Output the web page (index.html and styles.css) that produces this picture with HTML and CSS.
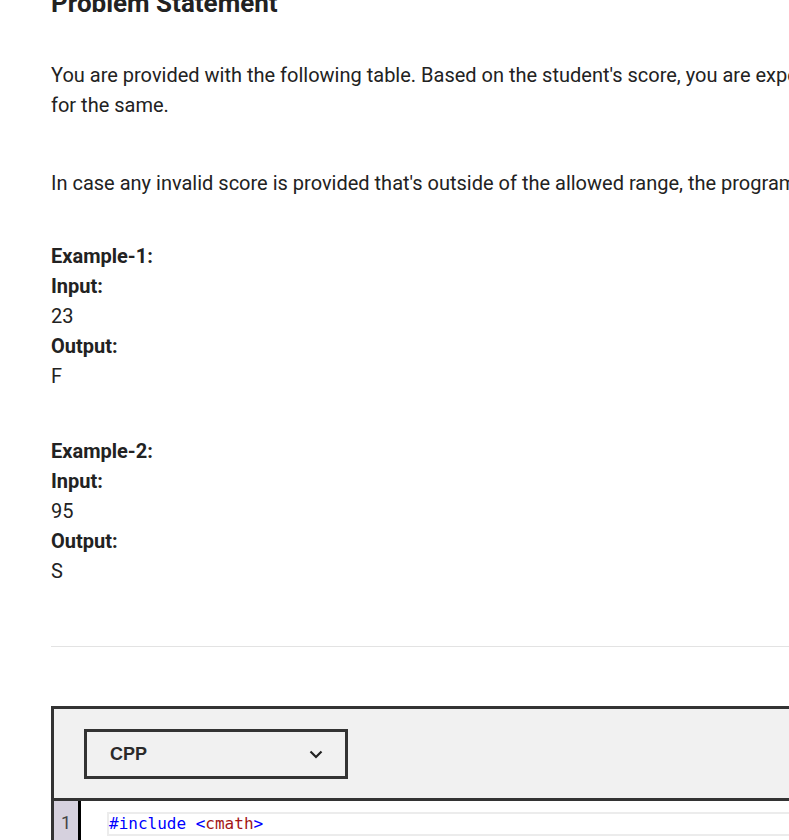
FILE: index.html
```html
<!DOCTYPE html>
<html lang="en">
<head>
<meta charset="utf-8">
<title>Problem Statement</title>
<link rel="stylesheet" href="styles.css">
</head>
<body>
<main class="page">
  <h2 class="title">Problem Statement</h2>
  <p class="para">You are provided with the following table. Based on the student's score, you are expected to print the corresponding grade for the same.</p>
  <p class="para">In case any invalid score is provided that's outside of the allowed range, the program should print "Invalid".</p>
  <div class="example">
    <div class="label">Example-1:</div>
    <div class="label">Input:</div>
    <div class="value">23</div>
    <div class="label">Output:</div>
    <div class="value">F</div>
  </div>
  <div class="example">
    <div class="label">Example-2:</div>
    <div class="label">Input:</div>
    <div class="value">95</div>
    <div class="label">Output:</div>
    <div class="value">S</div>
  </div>
  <hr class="rule">
  <section class="editor">
    <div class="toolbar">
      <div class="select">
        <span class="select-text">CPP</span>
        <svg class="chev" width="14" height="9" viewBox="0 0 14 9"><polyline points="1.5,1.5 7,7 12.5,1.5" fill="none" stroke="#222" stroke-width="2.2"/></svg>
      </div>
    </div>
    <div class="code">
      <div class="gutter"><span class="ln">1</span></div>
      <div class="lines">
        <div class="line active"><span class="kw">#include</span> <span class="kw">&lt;</span><span class="str">cmath</span><span class="kw">&gt;</span></div>
      </div>
    </div>
  </section>
</main>
</body>
</html>
```
FILE: styles.css
```css
html, body {
  margin: 0;
  padding: 0;
  overflow: hidden;
  background: #fff;
}
body {
  font-family: Roboto, "Liberation Sans", sans-serif;
  color: #222;
}
.page {
  width: 1200px;
  margin: -12px 0 0 51px;
}
.title {
  font-size: 26px;
  font-weight: 700;
  line-height: 31px;
  margin: 0 0 41px;
}
.para {
  font-size: 20px;
  line-height: 30px;
  margin: 0 0 48px;
  width: 1085px;
}
.para + .para {
  margin-bottom: 43px;
}
.example {
  font-size: 20px;
  line-height: 30px;
  margin-bottom: 45px;
}
.example + .example {
  margin-bottom: 60px;
}
.label {
  font-weight: 700;
}
.rule {
  border: 0;
  border-top: 1px solid #e3e3e3;
  margin: 0 0 59px;
  height: 0;
}
.editor {
  border: 3px solid #333;
  background: #f1f1f1;
}
.toolbar {
  padding: 20px 30px 19px;
  border-bottom: 3px solid #333;
}
.select {
  height: 44px;
  border: 3px solid #333;
  display: flex;
  align-items: center;
  justify-content: space-between;
  padding: 0 22px 0 23px;
  box-sizing: content-box;
  width: 213px;
}
.select-text {
  font-family: "Liberation Sans", Arial, sans-serif;
  font-weight: 700;
  font-size: 18px;
  color: #2a2a2a;
}
.chev { display: block; }
.code {
  display: flex;
  background: #fff;
  min-height: 60px;
}
.gutter {
  width: 24px;
  background: #d6d1de;
  border-right: 3px solid #000;
  text-align: center;
  padding-top: 10px;
}
.ln {
  font-family: Roboto, sans-serif;
  font-size: 18px;
  color: #444;
  line-height: 24px;
}
.lines {
  flex: 1;
  padding: 11px 0 0 26px;
}
.line {
  font-family: "DejaVu Sans Mono", "Liberation Mono", monospace;
  font-size: 16px;
  line-height: 20px;
  height: 20px;
  border: 2px solid #ececec;
}
.kw { color: #0000ff; }
.str { color: #a31515; }
```
